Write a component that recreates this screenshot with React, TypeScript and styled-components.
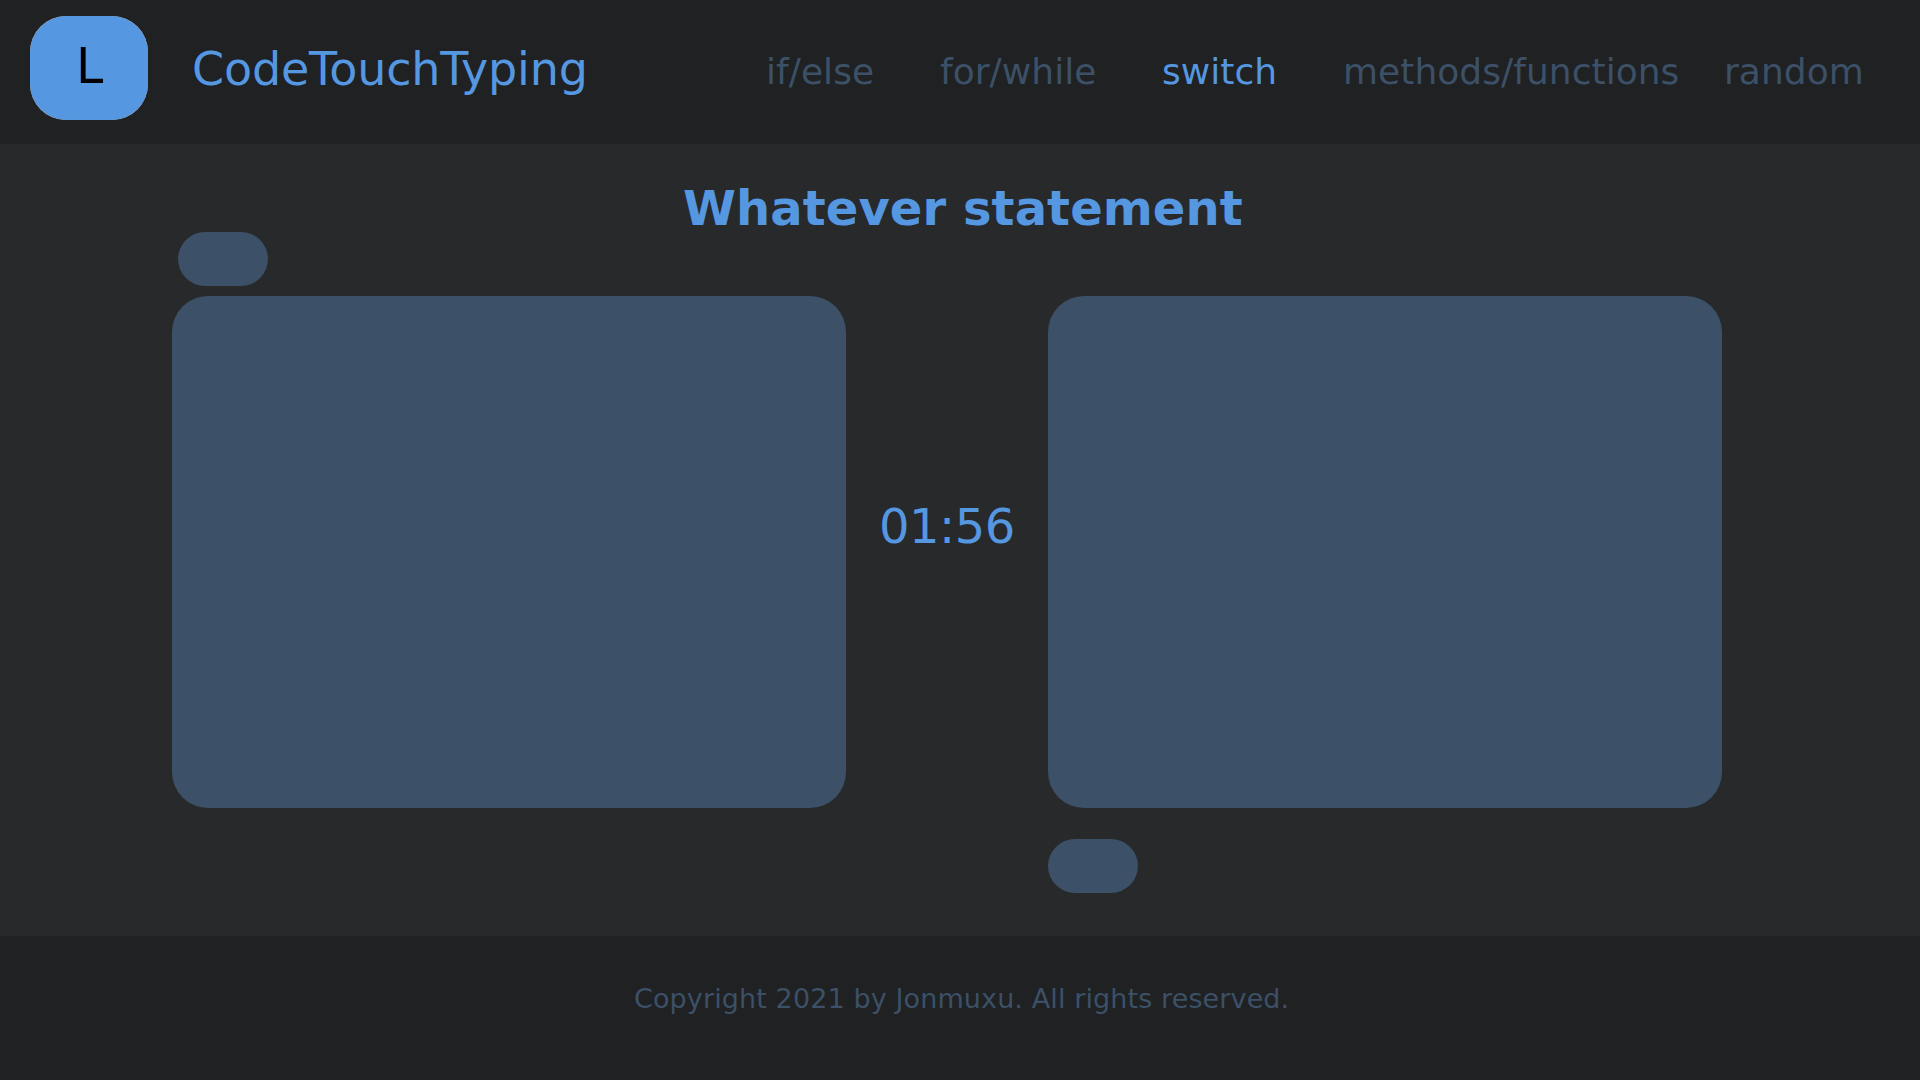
import React from "react";
import styled, { createGlobalStyle } from "styled-components";

const color = {
  bar: "#1f2122",
  page: "#28292b",
  accent: "#5597e0",
  muted: "#3c5067",
  logoEdge: "#c4bcb4",
};

const GlobalStyle = createGlobalStyle`
  *, *::before, *::after { box-sizing: border-box; }
  body {
    margin: 0;
    background: ${color.page};
    font-family: "DejaVu Sans", sans-serif;
  }
`;

const Page = styled.div`
  display: grid;
  grid-template-rows: 144px 792px 144px;
  width: 1920px;
  height: 1080px;
  overflow: hidden;
`;

const Header = styled.header`
  display: flex;
  align-items: flex-start;
  background: ${color.bar};
  padding: 16px 0 0 30px;
`;

const LogoFrame = styled.div`
  width: 118px;
  height: 104px;
  border-radius: 36px;
  background: ${color.logoEdge};
`;

const Logo = styled.div`
  height: 104px;
  border-radius: 36.5px;
  background: ${color.accent};
  color: #000;
  font-size: 49px;
  line-height: 102px;
  padding-left: 46px;
`;

const Brand = styled.div`
  width: 574px;
  margin-left: 44px;
  color: ${color.accent};
  font-size: 46px;
  letter-spacing: -0.17px;
  line-height: 106px;
  white-space: nowrap;
`;

const Nav = styled.nav`
  display: grid;
  grid-template-columns: 174px 222px 181px 381px auto;
`;

const NavLink = styled.a<{ $active?: boolean }>`
  color: ${(p) => (p.$active ? color.accent : color.muted)};
  font-size: 36px;
  letter-spacing: 0.04px;
  line-height: 111px;
  white-space: nowrap;
`;

const Main = styled.main`
  display: grid;
  grid-template-columns: 674px 202px 674px;
  grid-template-rows: 88px 64px 512px 85px;
  padding-left: 172px;
  background: ${color.page};
`;

const Heading = styled.h1`
  grid-column: 1 / -1;
  margin: 0;
  padding: 36px 0 0 511px;
  color: ${color.accent};
  font-size: 48px;
  letter-spacing: 0.08px;
  line-height: 56px;
  white-space: nowrap;
`;

const Pill = styled.div<{ $side: "left" | "right" }>`
  grid-column: ${(p) => (p.$side === "left" ? 1 : 3)};
  grid-row: ${(p) => (p.$side === "left" ? 2 : 4)};
  width: 90px;
  height: 54px;
  margin: ${(p) => (p.$side === "left" ? "0 0 0 6px" : "31px 0 0")};
  border-radius: 27px;
  background: ${color.muted};
`;

const Panel = styled.section<{ $column: number }>`
  grid-column: ${(p) => p.$column};
  grid-row: 3;
  border-radius: 36px;
  background: ${color.muted};
`;

const Timer = styled.div`
  grid-column: 2;
  grid-row: 3;
  padding: 202px 0 0 33px;
  color: ${color.accent};
  font-size: 48px;
  letter-spacing: -0.5px;
  line-height: 56px;
`;

const Footer = styled.footer`
  background: ${color.bar};
  padding: 47px 0 0 634px;
  color: ${color.muted};
  font-size: 27px;
  letter-spacing: 0.11px;
  line-height: 32px;
  white-space: nowrap;
`;

const links = ["if/else", "for/while", "switch", "methods/functions", "random"];

export default function App() {
  return (
    <>
      <GlobalStyle />
      <Page>
        <Header>
          <LogoFrame>
            <Logo>L</Logo>
          </LogoFrame>
          <Brand>CodeTouchTyping</Brand>
          <Nav>
            {links.map((label) => (
              <NavLink key={label} $active={label === "switch"}>
                {label}
              </NavLink>
            ))}
          </Nav>
        </Header>
        <Main>
          <Heading>Whatever statement</Heading>
          <Pill $side="left" />
          <Panel $column={1} />
          <Timer>01:56</Timer>
          <Panel $column={3} />
          <Pill $side="right" />
        </Main>
        <Footer>Copyright 2021 by Jonmuxu. All rights reserved.</Footer>
      </Page>
    </>
  );
}
